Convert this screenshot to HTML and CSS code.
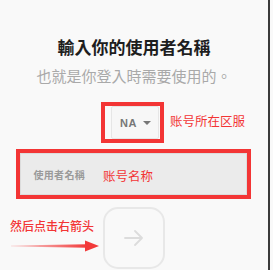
FILE: index.html
```html
<!DOCTYPE html>
<html lang="zh-TW">
<head>
    <meta charset="UTF-8">
    <meta name="viewport" content="width=device-width, initial-scale=1.0">
    <title>輸入你的使用者名稱</title>
    <link rel="stylesheet" href="styles.css">
</head>
<body>
    <div class="screen">
        <h1 class="title">輸入你的使用者名稱</h1>
        <p class="subtitle">也就是你登入時需要使用的。</p>

        <div class="region">
            <div class="mark region-mark">
                <button class="region-select">
                    <span class="region-code">NA</span>
                    <span class="caret"></span>
                </button>
            </div>
            <span class="note region-note" lang="zh-CN">账号所在区服</span>
        </div>

        <div class="mark name-mark">
            <div class="name-field">
                <span class="name-label">使用者名稱</span>
                <span class="note name-note" lang="zh-CN">账号名称</span>
            </div>
        </div>

        <div class="action">
            <div class="hint">
                <span class="note hint-text" lang="zh-CN">然后点击右箭头</span>
                <svg class="hint-arrow" width="88" height="14" viewBox="0 0 88 14">
                    <defs>
                        <linearGradient id="fade" x1="0" x2="1" y1="0" y2="0">
                            <stop offset="0" stop-color="#f23a3a" stop-opacity="0.15"/>
                            <stop offset="1" stop-color="#f23a3a" stop-opacity="1"/>
                        </linearGradient>
                    </defs>
                    <polygon points="0,6.6 76,5.2 76,8.8 0,7.4" fill="url(#fade)"/>
                    <polygon points="74,1.5 88,7 74,12.5" fill="#f23a3a"/>
                </svg>
            </div>
            <button class="next-btn">
                <svg width="20" height="16" viewBox="0 0 20 16">
                    <path d="M1 8h17M11 1l7 7-7 7" fill="none" stroke="#dcdcdc" stroke-width="1.8" stroke-linecap="round" stroke-linejoin="round"/>
                </svg>
            </button>
        </div>
    </div>
</body>
</html>
```
FILE: styles.css
```css
html, body {
    margin: 0;
    padding: 0;
    background: #f9f9f9;
}
body {
    font-family: "Noto Sans CJK TC", "Noto Sans", sans-serif;
}
.screen {
    width: 270px;
    height: 270px;
    box-sizing: border-box;
    border-right: 2px solid #3b3b3b;
    padding-top: 37px;
    display: flex;
    flex-direction: column;
    align-items: center;
    overflow: hidden;
}
.title {
    margin: 0;
    font-size: 17px;
    line-height: 20px;
    font-weight: 700;
    color: #1e1e1e;
}
.subtitle {
    margin: 10px 0 0;
    font-size: 15px;
    line-height: 18px;
    color: #a9a9a9;
}
.note {
    font-family: "Noto Sans CJK SC", sans-serif;
    color: #f33535;
    white-space: nowrap;
}
.mark {
    box-sizing: border-box;
    border: 4px solid #f33535;
}

/* region picker */
.region {
    position: relative;
    margin-top: 17px;
    margin-right: 3px;
}
.region-mark {
    width: 63px;
    height: 41px;
    padding: 0 1px 0 6px;
}
.region-select {
    width: 48px;
    height: 100%;
    box-sizing: border-box;
    margin: 0;
    padding: 0 0 0 8px;
    border: 1px solid #e6e6e6;
    border-radius: 2px;
    background: #f7f7f7;
    display: flex;
    align-items: center;
    gap: 6px;
}
.region-code {
    font-family: "Liberation Sans", Arial, sans-serif;
    font-size: 11px;
    font-weight: 700;
    color: #777;
    letter-spacing: 0.5px;
}
.caret {
    width: 0;
    height: 0;
    border-left: 4px solid transparent;
    border-right: 4px solid transparent;
    border-top: 4px solid #777;
}
.region-note {
    position: absolute;
    left: calc(100% + 6px);
    top: 11px;
    font-size: 12.5px;
    line-height: 16px;
}

/* username */
.name-mark {
    margin-top: 6px;
    width: 235px;
    height: 50px;
    margin-right: 2px;
}
.name-field {
    height: 100%;
    box-sizing: border-box;
    background: #ebebeb;
    border: 1px solid #dcdcdc;
    display: flex;
    align-items: center;
    padding-left: 13px;
}
.name-label {
    font-size: 10px;
    font-weight: 700;
    color: #9a9a9a;
    letter-spacing: 0.3px;
}
.name-note {
    margin-left: 18px;
    padding-top: 3px;
    font-size: 12.5px;
}

/* next */
.action {
    position: relative;
    margin-top: 8px;
}
.next-btn {
    width: 62px;
    height: 62px;
    margin: 0;
    padding: 0;
    box-sizing: border-box;
    border: 2px solid #e8e8e8;
    border-radius: 15px;
    background: transparent;
    display: flex;
    align-items: center;
    justify-content: center;
}
.hint {
    position: absolute;
    right: calc(100% + 4px);
    top: 11px;
    display: flex;
    flex-direction: column;
    align-items: flex-start;
}
.hint-text {
    margin-left: -1px;
    font-size: 12px;
    line-height: 16px;
    font-weight: 500;
}
.hint-arrow {
    margin-top: 5px;
}
```
